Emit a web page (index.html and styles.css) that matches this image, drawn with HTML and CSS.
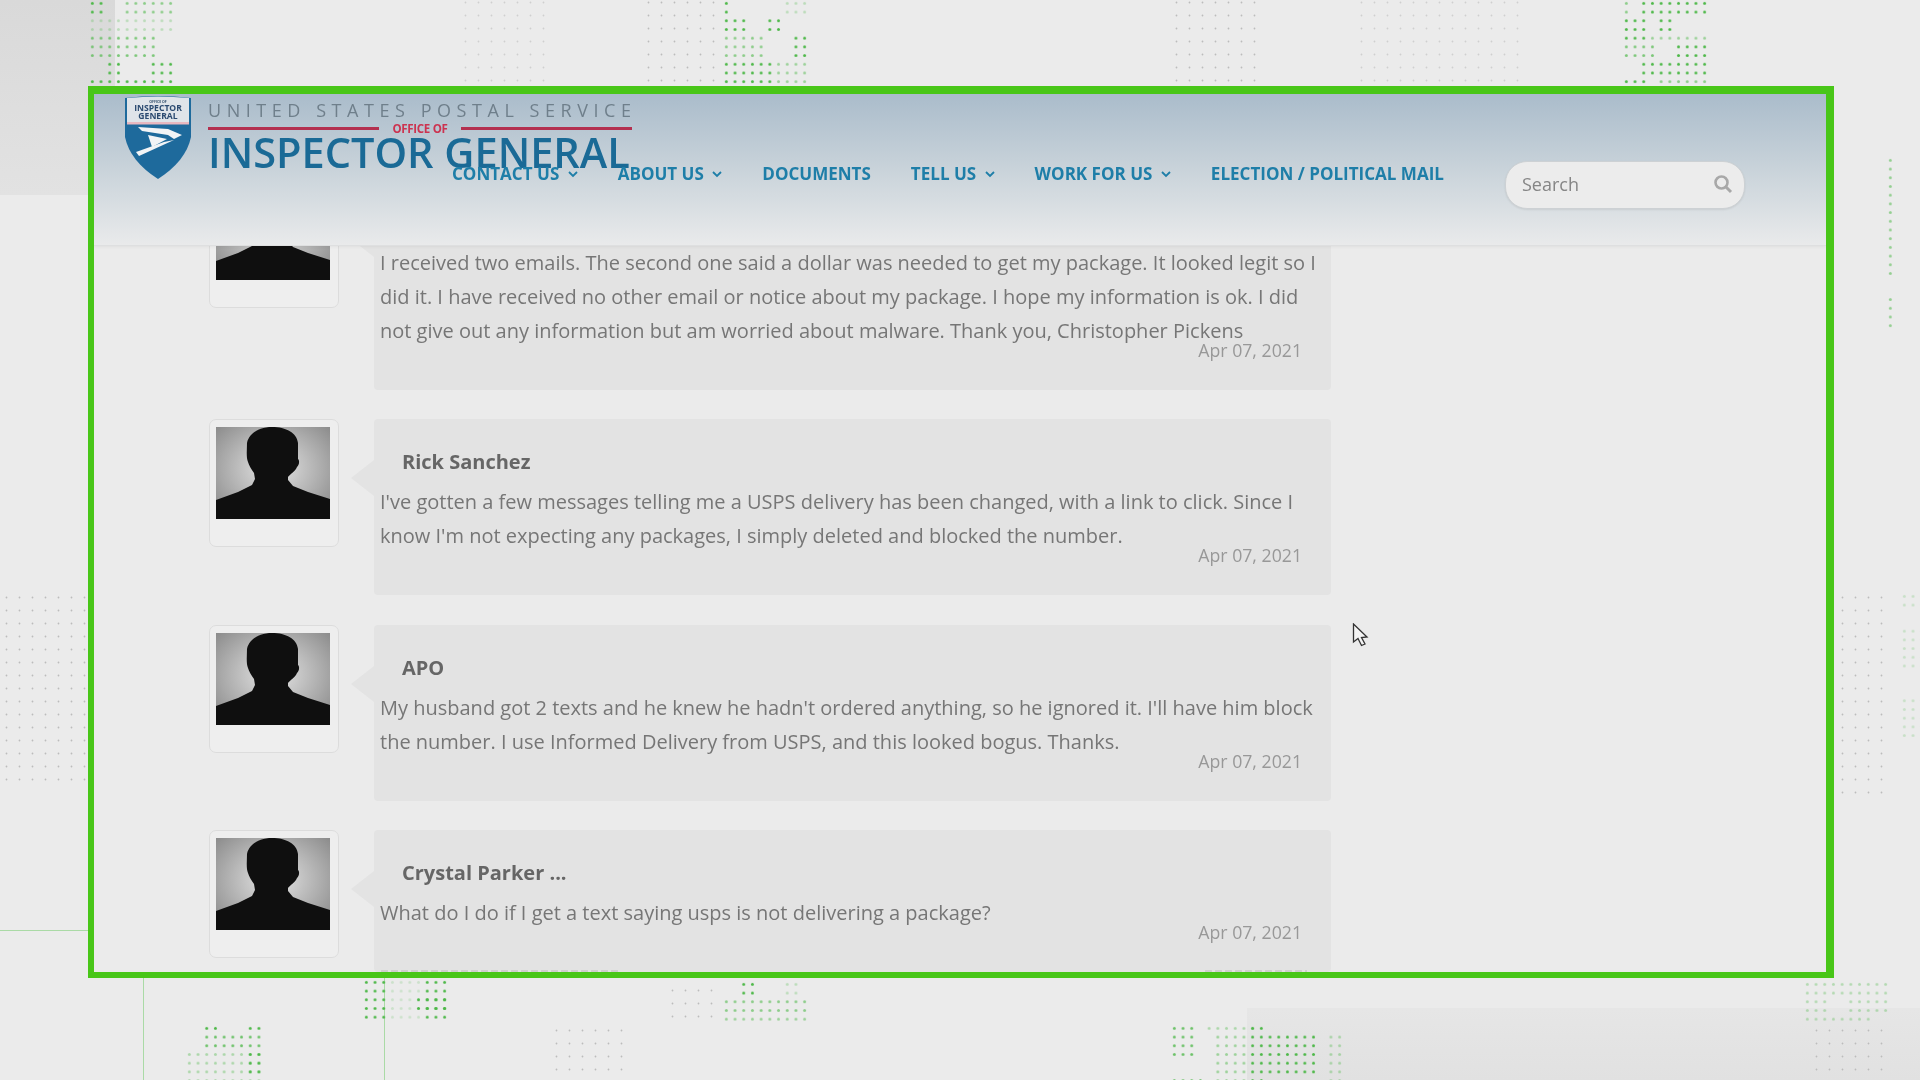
FILE: index.html
```html
<!DOCTYPE html>
<html lang="en">
<head>
    <meta charset="UTF-8">
    <title>Inspector General comments</title>
    <link rel="stylesheet" href="styles.css">
</head>
<body>

    <!-- backdrop: grey panels, thin lines and dot fields round the frame -->
    <div class="panel panel-top"></div>
    <div class="panel panel-bottom"></div>
    <div class="rule rule-h"></div>
    <div class="rule rule-v1"></div>
    <div class="rule rule-v2"></div>

    <svg class="dots" width="1920" height="1080" viewBox="0 0 1920 1080">
        <defs>
            <pattern id="green" width="1" height="1" patternUnits="userSpaceOnUse"><circle cx=".5" cy=".5" r=".17" fill="#4db848"/></pattern>
            <pattern id="grey" width="1" height="1" patternUnits="userSpaceOnUse"><circle cx=".5" cy=".5" r=".07" fill="#bcbcbc"/></pattern>
        </defs>

        <!-- green fields, one unit is one dot -->
        <g transform="translate(88,-1) scale(8.7)" fill="url(#green)">
            <rect width="2" height="2"/><rect x="4" width="6" height="2" opacity=".6"/>
            <rect y="2" width="10" height="2" opacity=".3"/>
            <rect y="4" width="8" height="3" opacity=".7"/>
            <rect x="2" y="7" width="2" height="2"/><rect x="7" y="7" width="3" height="2"/>
            <rect y="9" width="10" height="1"/>
        </g>
        <g transform="translate(722,-1) scale(8.7)" fill="url(#green)">
            <rect width="1" height="2"/><rect x="7" width="3" height="2" opacity=".3"/>
            <rect y="2" width="3" height="2"/><rect x="5" y="2" width="2" height="2"/>
            <rect y="4" width="5" height="3" opacity=".6"/><rect x="8" y="4" width="2" height="3"/>
            <rect y="7" width="6" height="3"/><rect x="6" y="7" width="4" height="3" opacity=".5"/>
        </g>
        <g transform="translate(1622,-1) scale(8.7)" fill="url(#green)">
            <rect width="1" height="2" opacity=".6"/><rect x="2" width="8" height="2"/>
            <rect y="2" width="3" height="2"/><rect x="4" y="2" width="2" height="2"/>
            <rect y="4" width="3" height="1"/><rect x="3" y="4" width="7" height="1" opacity=".5"/>
            <rect y="5" width="4" height="2" opacity=".7"/><rect x="6" y="5" width="4" height="2"/>
            <rect x="2" y="7" width="8" height="2"/><rect y="9" width="3" height="1"/><rect x="4" y="9" width="6" height="1" opacity=".6"/>
        </g>
        <g transform="translate(362,978) scale(8.7)" fill="url(#green)">
            <rect width="3" height="5"/><rect x="3" width="4" height="5" opacity=".2"/>
            <rect x="6" y="2" width="4" height="2"/><rect x="7" width="3" height="5"/>
        </g>
        <g transform="translate(185,1024) scale(8.7)" fill="url(#green)">
            <rect x="2" width="2" height="1"/><rect x="7" width="2" height="1"/>
            <rect x="2" y="1" width="7" height="2" opacity=".8"/>
            <rect y="3" width="9" height="4" opacity=".4"/><rect x="7" y="3" width="2" height="3"/>
        </g>
        <g transform="translate(722,980) scale(8.7)" fill="url(#green)">
            <rect x="2" width="2" height="2"/><rect x="7" width="2" height="2" opacity=".3"/>
            <rect y="2" width="10" height="2" opacity=".6"/><rect y="4" width="10" height="1" opacity=".5"/>
        </g>
        <g transform="translate(1170,1024) scale(8.7)" fill="url(#green)">
            <rect width="3" height="4" opacity=".8"/><rect x="4" width="6" height="1" opacity=".4"/>
            <rect x="5" y="1" width="4" height="6" opacity=".5"/><rect x="9" y="0" width="2" height="7"/>
            <rect x="11" y="1" width="6" height="5"/><rect x="18" y="1" width="2" height="6" opacity=".4"/>
            <rect y="6" width="4" height="1" opacity=".8"/>
        </g>
        <g transform="translate(1803,980) scale(8.7)" fill="url(#green)" opacity=".35">
            <rect width="10" height="2"/><rect y="2" width="3" height="2"/><rect x="5" y="2" width="5" height="2"/><rect y="4" width="8" height="1"/>
        </g>
        <g transform="translate(1886,156) scale(8.7)" fill="url(#green)" opacity=".55">
            <rect width="1" height="14"/><rect y="16" width="1" height="4"/>
        </g>
        <g transform="translate(1900,592) scale(8.7)" fill="url(#green)" opacity=".22">
            <rect width="3" height="2"/><rect y="4" width="3" height="5"/><rect y="12" width="3" height="5"/>
        </g>

        <!-- grey fields -->
        <g transform="translate(0,591) scale(13)" fill="url(#grey)"><rect width="7" height="15"/></g>
        <g transform="translate(1836,591) scale(13)" fill="url(#grey)"><rect width="4" height="16"/></g>
        <g transform="translate(459,-4) scale(13)" fill="url(#grey)" opacity=".6"><rect width="7" height="7"/></g>
        <g transform="translate(642,-4) scale(13)" fill="url(#grey)"><rect width="6" height="7"/></g>
        <g transform="translate(1170,-4) scale(13)" fill="url(#grey)"><rect width="7" height="7"/></g>
        <g transform="translate(1355,-4) scale(13)" fill="url(#grey)" opacity=".6"><rect width="13" height="7"/></g>
        <g transform="translate(550,1024) scale(13)" fill="url(#grey)"><rect width="6" height="5"/></g>
        <g transform="translate(666,984) scale(13)" fill="url(#grey)"><rect width="4" height="3"/></g>
        <g transform="translate(1810,1024) scale(13)" fill="url(#grey)"><rect width="6" height="5"/></g>
    </svg>

    <div class="frame">
        <header class="site-header">
            <div class="logo">
                <svg class="shield" width="68" height="84" viewBox="0 0 68 84">
                    <path d="M1 3 Q34 -1 67 3 L67 42 Q62 66 34 84 Q6 66 1 42 Z" fill="#1e6a9c"/>
                    <path d="M3 3 Q34 0 65 3 L65 27 L3 27 Z" fill="#dfe4e9"/>
                    <rect x="3" y="27" width="62" height="2.5" fill="#e8b8c0"/>
                    <text class="shield-small" x="34" y="8">OFFICE OF</text>
                    <text class="shield-big" x="34" y="16">INSPECTOR</text>
                    <text class="shield-big" x="34" y="24">GENERAL</text>
                    <path d="M14 32 L44 34 L58 40 L50 44 L44 40 L18 36 Z" fill="#f2f4f6"/>
                    <path d="M24 40 L43 44 L28 52 Z" fill="#f2f4f6"/>
                    <path d="M50 45 L15 61 L12 57 L40 47 Z" fill="#f2f4f6"/>
                </svg>
                <div class="wordmark">
                    <div class="wordmark-top">UNITED STATES POSTAL SERVICE</div>
                    <div class="wordmark-office"><span>OFFICE OF</span></div>
                    <div class="wordmark-main">INSPECTOR GENERAL</div>
                </div>
            </div>

            <nav class="main-nav">
                <a>CONTACT US <svg class="chev" width="10" height="7" viewBox="0 0 10 7"><path d="M1 1 L5 5 L9 1" /></svg></a>
                <a>ABOUT US <svg class="chev" width="10" height="7" viewBox="0 0 10 7"><path d="M1 1 L5 5 L9 1" /></svg></a>
                <a>DOCUMENTS</a>
                <a>TELL US <svg class="chev" width="10" height="7" viewBox="0 0 10 7"><path d="M1 1 L5 5 L9 1" /></svg></a>
                <a>WORK FOR US <svg class="chev" width="10" height="7" viewBox="0 0 10 7"><path d="M1 1 L5 5 L9 1" /></svg></a>
                <a>ELECTION / POLITICAL MAIL</a>
            </nav>

            <div class="search-box">
                <span>Search</span>
                <svg width="20" height="20" viewBox="0 0 20 20"><circle cx="8.5" cy="8.5" r="6" fill="none" stroke="#a8a8a8" stroke-width="2.6"/><path d="M13 13 L18 18" stroke="#a8a8a8" stroke-width="3"/></svg>
            </div>
        </header>

        <div class="comments">
            <div class="comment">
                <div class="avatar">
                    <svg width="114" height="92" viewBox="0 0 114 92"><use href="#silhouette"/></svg>
                </div>
                <div class="bubble">
                    <div class="name">Christopher Pickens</div>
                    <p class="text">I received two emails. The second one said a dollar was needed to get my package. It looked legit so I did it. I have received no other email or notice about my package. I hope my information is ok. I did not give out any information but am worried about malware. Thank you, Christopher Pickens</p>
                    <div class="date">Apr 07, 2021</div>
                </div>
            </div>
            <div class="comment">
                <div class="avatar">
                    <svg width="114" height="92" viewBox="0 0 114 92"><use href="#silhouette"/></svg>
                </div>
                <div class="bubble">
                    <div class="name">Rick Sanchez</div>
                    <p class="text">I've gotten a few messages telling me a USPS delivery has been changed, with a link to click. Since I know I'm not expecting any packages, I simply deleted and blocked the number.</p>
                    <div class="date">Apr 07, 2021</div>
                </div>
            </div>
            <div class="comment">
                <div class="avatar">
                    <svg width="114" height="92" viewBox="0 0 114 92"><use href="#silhouette"/></svg>
                </div>
                <div class="bubble">
                    <div class="name">APO</div>
                    <p class="text">My husband got 2 texts and he knew he hadn't ordered anything, so he ignored it. I'll have him block the number. I use Informed Delivery from USPS, and this looked bogus. Thanks.</p>
                    <div class="date">Apr 07, 2021</div>
                </div>
            </div>
            <div class="comment">
                <div class="avatar">
                    <svg width="114" height="92" viewBox="0 0 114 92"><use href="#silhouette"/></svg>
                </div>
                <div class="bubble">
                    <div class="name">Crystal Parker ...</div>
                    <p class="text">What do I do if I get a text saying usps is not delivering a package?</p>
                    <div class="date">Apr 07, 2021</div>
                </div>
            </div>
        </div>

        <!-- top edge of the next comment just showing above the frame's bottom -->
        <div class="sliver sliver-text"></div>
        <div class="sliver sliver-date"></div>
    </div>

    <svg class="cursor" width="18" height="26" viewBox="0 0 18 26">
        <path d="M1.5 1 L1.5 19 L6 15.5 L9.5 22.5 L13 21 L9.5 14.5 L15 14 Z" fill="#f4f4f4" stroke="#333" stroke-width="1.3"/>
    </svg>

    <svg class="defs" width="0" height="0">
        <defs>
            <radialGradient id="halo" cx=".5" cy=".45" r=".68">
                <stop offset="0" stop-color="#e6e6e6"/>
                <stop offset="1" stop-color="#8a8a8a"/>
            </radialGradient>
            <g id="silhouette">
                <rect width="114" height="92" fill="url(#halo)"/>
                <path d="M0 73 L22 65 L36 58 L39 52 L38 46 C35 42 33 38 32 35 C30 30 31 22 31 16 C33 6 44 0 56 0 C70 0 81 6 82 16 L82 32 C84 34 83 38 81 40 C79 45 74 47 72 50 L72 53 L77 59 L92 65 L114 72 L114 92 L0 92 Z" fill="#0f0f0f"/>
            </g>
        </defs>
    </svg>

</body>
</html>
```

FILE: styles.css
```css
body {
    margin: 0;
    width: 1920px;
    height: 1080px;
    overflow: hidden;
    position: relative;
    background: #ebebeb;
    font-family: "Open Sans", sans-serif;
}

.panel {
    position: absolute;
}

.panel-top {
    left: 0;
    top: 0;
    width: 115px;
    height: 195px;
    background: linear-gradient(#d9d9d9, #e2e2e2);
}

.panel-bottom {
    left: 1247px;
    top: 1008px;
    width: 673px;
    height: 72px;
    background: linear-gradient(#e6e6e6, #e1e1e1);
}

.rule {
    position: absolute;
    background: #aadaa6;
}

.rule-h {
    left: 0;
    top: 930px;
    width: 88px;
    height: 1px;
}

.rule-v1 {
    left: 143px;
    top: 978px;
    width: 1px;
    height: 102px;
}

.rule-v2 {
    left: 384px;
    top: 978px;
    width: 1px;
    height: 102px;
}

.dots {
    position: absolute;
    left: 0;
    top: 0;
}

.defs {
    position: absolute;
}

.frame {
    position: absolute;
    left: 88px;
    top: 86px;
    width: 1746px;
    height: 892px;
    box-sizing: border-box;
    border: solid #48c618;
    border-width: 8px 8px 6px 6px;
    background: #ebebeb;
    overflow: hidden;
}

.site-header {
    position: relative;
    z-index: 2;
    height: 152px;
    box-sizing: border-box;
    padding-left: 358px;
    display: flex;
    align-items: flex-start;
    background: linear-gradient(#aabccb, #c9d3da 50%, #e9eaeb);
    border-bottom: 1px solid #dedfe0;
    box-shadow: 0 1px 3px rgba(0, 0, 0, 0.05);
    filter: blur(0.4px);
}

.logo {
    position: absolute;
    left: 30px;
    top: 1px;
    display: flex;
    gap: 16px;
}

.shield-small {
    font: bold 3.5px "Open Sans", sans-serif;
    fill: #33506e;
    text-anchor: middle;
}

.shield-big {
    font: bold 8.6px "Open Sans", sans-serif;
    fill: #2b4a70;
    text-anchor: middle;
}

.wordmark {
    width: 424px;
    padding-top: 4px;
}

.wordmark-top {
    font-size: 18px;
    line-height: 22px;
    letter-spacing: 5.55px;
    color: #6f7f8b;
    white-space: nowrap;
}

.wordmark-office {
    display: flex;
    align-items: center;
    gap: 13px;
    height: 12px;
    margin-top: 1px;
}

.wordmark-office::before,
.wordmark-office::after {
    content: "";
    flex: 1;
    height: 3px;
    background: #b4304f;
}

.wordmark-office span {
    font-size: 11.5px;
    line-height: 13px;
    font-weight: 700;
    letter-spacing: -0.3px;
    color: #cc3350;
}

.wordmark-main {
    font-size: 41.5px;
    line-height: 44px;
    font-weight: 600;
    margin-top: -4px;
    color: #1a6a96;
    white-space: nowrap;
}

.main-nav {
    display: flex;
    gap: 40px;
    margin-top: 68px;
    position: relative;
}

.main-nav a {
    font-size: 17.05px;
    line-height: 24px;
    font-weight: 700;
    color: #1e7ea8;
    white-space: nowrap;
}

.chev {
    margin-left: 4px;
    vertical-align: 2px;
    fill: none;
    stroke: #1e7ea8;
    stroke-width: 1.8;
}

.search-box {
    position: absolute;
    left: 1411px;
    top: 67px;
    width: 240px;
    height: 48px;
    box-sizing: border-box;
    padding: 0 11px 2px 16px;
    display: flex;
    align-items: center;
    justify-content: space-between;
    background: #ececec;
    border: 1px solid #cdd1d4;
    border-radius: 22px;
    box-shadow: 0 1px 2px rgba(0, 0, 0, 0.08);
    font-size: 18px;
    color: #868686;
}

.comments {
    margin-top: -66px;
    padding-left: 115px;
    display: flex;
    flex-direction: column;
    gap: 29.4px;
    filter: blur(0.4px);
}

.comment {
    display: flex;
    align-items: flex-start;
    gap: 35px;
}

.avatar {
    width: 130px;
    height: 128px;
    box-sizing: border-box;
    padding: 7px 6px;
    background: #eeeeee;
    border: 1px solid #dcdcdc;
    border-radius: 7px;
}

.avatar svg {
    display: block;
}

.bubble {
    position: relative;
    width: 957px;
    box-sizing: border-box;
    padding: 26px 5px 28px 6px;
    background: #e3e3e3;
    border-radius: 4px;
}

.bubble::before {
    content: "";
    position: absolute;
    left: -23px;
    top: 41px;
    border-style: solid;
    border-width: 18px 23px 18px 0;
    border-color: transparent #e3e3e3 transparent transparent;
}

.name {
    margin: 0 0 6px 22px;
    font-size: 20px;
    line-height: 34px;
    font-weight: 700;
    color: #666666;
}

.text {
    margin: 0;
    font-size: 20px;
    line-height: 34px;
    color: #767676;
}

.date {
    margin-top: -10px;
    padding-right: 24px;
    text-align: right;
    font-size: 17.7px;
    line-height: 24px;
    color: #989898;
}

.sliver {
    position: absolute;
    bottom: 0;
    height: 2px;
    background: repeating-linear-gradient(90deg, #b5b5b5 0 7px, transparent 7px 10px);
    opacity: 0.45;
}

.sliver-text {
    left: 287px;
    width: 240px;
}

.sliver-date {
    left: 1111px;
    width: 102px;
}

.cursor {
    position: absolute;
    left: 1352px;
    top: 623px;
}
```
